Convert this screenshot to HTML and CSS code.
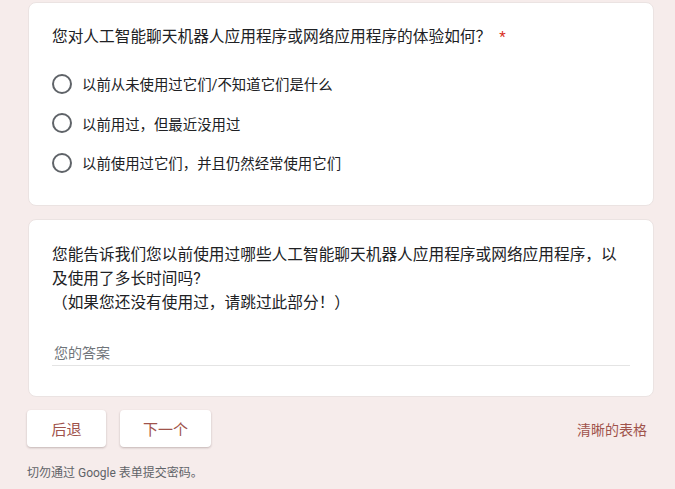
FILE: index.html
```html
<!DOCTYPE html>
<html lang="zh-CN">
<head>
<meta charset="utf-8">
<link rel="stylesheet" href="styles.css">
</head>
<body>
<div class="page">
  <div class="card">
    <div class="question">您对人工智能聊天机器人应用程序或网络应用程序的体验如何？<span class="req">*</span></div>
    <div class="options">
      <div class="option"><span class="radio"></span><span class="label">以前从未使用过它们/不知道它们是什么</span></div>
      <div class="option"><span class="radio"></span><span class="label">以前用过，但最近没用过</span></div>
      <div class="option"><span class="radio"></span><span class="label">以前使用过它们，并且仍然经常使用它们</span></div>
    </div>
  </div>
  <div class="card card2">
    <div class="question q2">您能告诉我们您以前使用过哪些人工智能聊天机器人应用程序或网络应用程序，以及使用了多长时间吗?<br>（如果您还没有使用过，请跳过此部分！）</div>
    <div class="answer"><span class="placeholder">您的答案</span></div>
  </div>
  <div class="nav">
    <div class="buttons">
      <div class="btn btn-back">后退</div>
      <div class="btn btn-next">下一个</div>
    </div>
    <div class="clear">清晰的表格</div>
  </div>
  <div class="footer">切勿通过 Google 表单提交密码。</div>
</div>
</body>
</html>
```
FILE: styles.css
```css
html, body {
  margin: 0;
  padding: 0;
  background: #f6eceb;
}
body {
  font-family: Roboto, "Noto Sans CJK SC", sans-serif;
  color: #202124;
}
.page {
  width: 626px;
  margin-left: 28px;
  padding-top: 2px;
}
.card {
  background: #fff;
  border: 1px solid #ebe3e2;
  border-radius: 8px;
  padding: 22px 24px 21px 23px;
  box-sizing: border-box;
  height: 204px;
}
.question {
  font-size: 15.7px;
  line-height: 24px;
  letter-spacing: 0;
}
.req {
  color: #d93025;
  margin-left: 8px;
  font-size: 15px;
}
.options {
  margin-top: 15px;
}
.option {
  display: flex;
  align-items: center;
  height: 39.5px;
}
.radio {
  width: 16px;
  height: 16px;
  border: 2px solid #5f6368;
  border-radius: 50%;
  flex: none;
}
.label {
  margin-left: 10px;
  font-size: 14.4px;
  color: #202124;
}
.card2 {
  margin-top: 13px;
  height: 178px;
  padding-top: 23px;
}
.q2 {
  padding-right: 10px;
}
.answer {
  margin-top: 25px;
  border-bottom: 1px solid #e4e4e4;
  padding: 3px 0 2px 2px;
  line-height: 20px;
  font-size: 14px;
  width: 576px;
}
.placeholder {
  color: #70757a;
}
.nav {
  margin-top: 13px;
  display: flex;
  justify-content: space-between;
  align-items: center;
}
.buttons {
  display: flex;
  gap: 14px;
  margin-left: -1px;
}
.btn {
  height: 37px;
  background: #fff;
  border-radius: 4px;
  box-shadow: 0 1px 2px rgba(60, 40, 40, 0.2), 0 1px 3px rgba(60, 40, 40, 0.08);
  color: #a0534b;
  font-size: 15px;
  display: flex;
  align-items: center;
  justify-content: center;
}
.btn-back { width: 79px; }
.btn-next { width: 91px; }
.clear {
  color: #a0534b;
  font-size: 14px;
  margin-right: 7px;
}
.footer {
  margin-top: 16px;
  margin-left: -1px;
  font-size: 12px;
  color: #5f6368;
}
```
